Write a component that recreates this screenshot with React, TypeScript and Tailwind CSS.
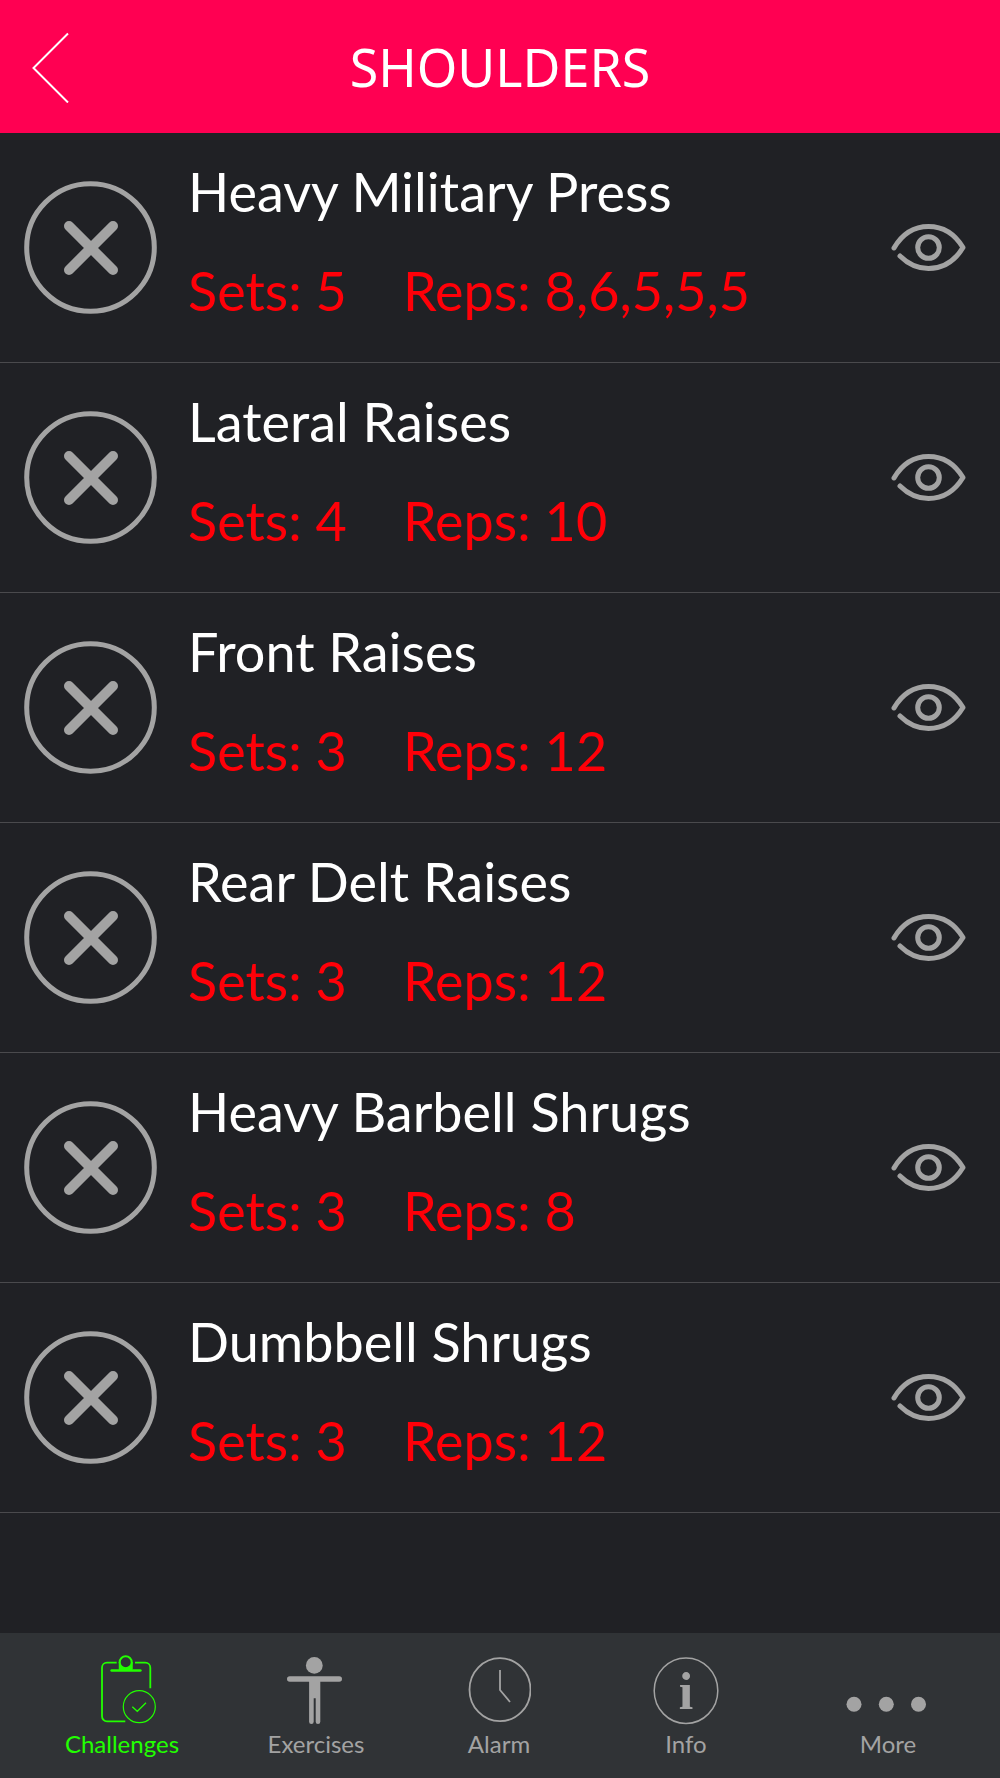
interface Exercise {
  name: string
  sets: number
  reps: string
}

const exercises: Exercise[] = [
  { name: 'Heavy Military Press', sets: 5, reps: '8,6,5,5,5' },
  { name: 'Lateral Raises', sets: 4, reps: '10' },
  { name: 'Front Raises', sets: 3, reps: '12' },
  { name: 'Rear Delt Raises', sets: 3, reps: '12' },
  { name: 'Heavy Barbell Shrugs', sets: 3, reps: '8' },
  { name: 'Dumbbell Shrugs', sets: 3, reps: '12' },
]

function BackIcon() {
  return (
    <svg width="40" height="72" viewBox="0 0 40 72" fill="none" stroke="currentColor" strokeWidth="2">
      <path d="M36 2.500 1.500 37 36 71.500" />
    </svg>
  )
}

function CrossIcon() {
  return (
    <svg width="134" height="134" viewBox="0 0 134 134" fill="none" stroke="currentColor">
      <circle cx="66.500" cy="66.500" r="63.800" strokeWidth="5" />
      <path d="M45 45 89 89M89 45 45 89" strokeWidth="10" strokeLinecap="round" />
    </svg>
  )
}

function EyeIcon() {
  return (
    <svg width="76" height="50" viewBox="0 0 76 50" fill="none" stroke="currentColor" strokeWidth="5" strokeLinecap="round" strokeLinejoin="round">
      <path d="M3 25C11.500 10.500 23.500 3.500 37.500 3.500c14 0 26 7 34.500 21C63.500 38.500 51.500 45.500 37.500 45.500c-11 0-20-4-28.500-12.500" />
      <circle cx="37.500" cy="24.500" r="10.800" />
    </svg>
  )
}

function ClipboardIcon() {
  return (
    <svg width="68" height="72" viewBox="0 0 68 72" fill="none" stroke="currentColor" strokeWidth="1.8">
      <path d="M28.700 8.700H19a5 5 0 0 0-5 5v48.600a5 5 0 0 0 5 5h18.300M47 8.700h10.300a5 5 0 0 1 5 5v20.600" />
      <circle cx="37.700" cy="8.300" r="6" strokeWidth="2" />
      <path d="M31 8v7.500h-7.500a1 1 0 0 0 0 2h29a1 1 0 0 0 0-2H44.500V8a6.800 6.800 0 0 1-13.500 0Z" fill="currentColor" strokeWidth="0.5" />
      <circle cx="51.300" cy="52.700" r="16" strokeWidth="1.200" />
      <path d="m44.300 52.700 5 4.600 8.700-8.600" strokeWidth="1.300" />
    </svg>
  )
}

function PersonIcon() {
  return (
    <svg width="60" height="72" viewBox="0 0 60 72" fill="currentColor">
      <circle cx="28.300" cy="11.400" r="8.400" />
      <path d="M3.800 22.200h49.400a2.800 2.800 0 0 1 0 5.600H34.300v40a2.200 2.200 0 0 1-4.600 0V44.300h-2v23.500a2.200 2.200 0 0 1-4.600 0v-40H3.800a2.800 2.800 0 0 1 0-5.600Z" />
    </svg>
  )
}

function ClockIcon() {
  return (
    <svg width="64" height="72" viewBox="0 0 64 72" fill="none" stroke="currentColor" strokeWidth="1.8">
      <ellipse cx="33" cy="35.700" rx="30.500" ry="31.500" />
      <path d="M33 16v20l10 12" />
    </svg>
  )
}

function InfoIcon() {
  return (
    <svg width="68" height="72" viewBox="0 0 68 72" fill="none">
      <ellipse cx="34" cy="36.700" rx="31.800" ry="32.800" stroke="currentColor" strokeWidth="1.500" />
      <text x="34" y="55" textAnchor="middle" fill="currentColor" className="font-['Liberation_Serif',serif] text-[52px] font-bold">
        i
      </text>
    </svg>
  )
}

function DotsIcon() {
  return (
    <svg width="84" height="72" viewBox="0 0 84 72" fill="currentColor">
      <circle cx="8" cy="50.300" r="7.500" />
      <circle cx="40.300" cy="50.300" r="7.500" />
      <circle cx="72.500" cy="50.300" r="7.500" />
    </svg>
  )
}

const tabs = [
  { label: 'Challenges', icon: ClipboardIcon, active: true },
  { label: 'Exercises', icon: PersonIcon, active: false },
  { label: 'Alarm', icon: ClockIcon, active: false },
  { label: 'Info', icon: InfoIcon, active: false },
  { label: 'More', icon: DotsIcon, active: false },
]

function ExerciseRow({ exercise }: { exercise: Exercise }) {
  return (
    <li className="flex h-[230px] items-center border-b border-[#4a4a4d] pr-[33px] pl-6">
      <button type="button" aria-label={`Remove ${exercise.name}`} className="text-[#a3a3a3]">
        <CrossIcon />
      </button>
      <div className="ml-[30px] flex-1 pb-[14px] text-[54px] leading-[99px]">
        <h2 className="text-white">{exercise.name}</h2>
        <p className="flex text-[#ff0008]">
          <span className="w-[215px]">Sets: {exercise.sets}</span>
          <span>Reps: {exercise.reps}</span>
        </p>
      </div>
      <button type="button" aria-label={`View ${exercise.name}`} className="text-[#a3a3a3]">
        <EyeIcon />
      </button>
    </li>
  )
}

export default function App() {
  return (
    <div className="flex min-h-screen flex-col bg-[#202125] font-['Lato',sans-serif]">
      <header className="grid h-[133px] grid-cols-[1fr_auto_1fr] items-center bg-[#ff0052] px-8 text-white">
        <button type="button" aria-label="Back" className="justify-self-start">
          <BackIcon />
        </button>
        <h1 className="font-['Noto_Sans',sans-serif] text-[52px] leading-[72px]">SHOULDERS</h1>
      </header>

      <ul>
        {exercises.map((exercise) => (
          <ExerciseRow key={exercise.name} exercise={exercise} />
        ))}
      </ul>

      <nav className="mt-auto grid h-[145px] grid-cols-[194fr_194fr_172fr_202fr_202fr] bg-[#303336] pt-[21px] pr-[11px] pl-[25px]">
        {tabs.map(({ label, icon: Icon, active }) => (
          <a
            key={label}
            href="#"
            aria-current={active ? 'page' : undefined}
            className={`flex flex-col items-center text-2xl leading-9 ${active ? 'text-[#22ff00]' : 'text-[#a3a3a3]'}`}
          >
            <Icon />
            {label}
          </a>
        ))}
      </nav>
    </div>
  )
}
